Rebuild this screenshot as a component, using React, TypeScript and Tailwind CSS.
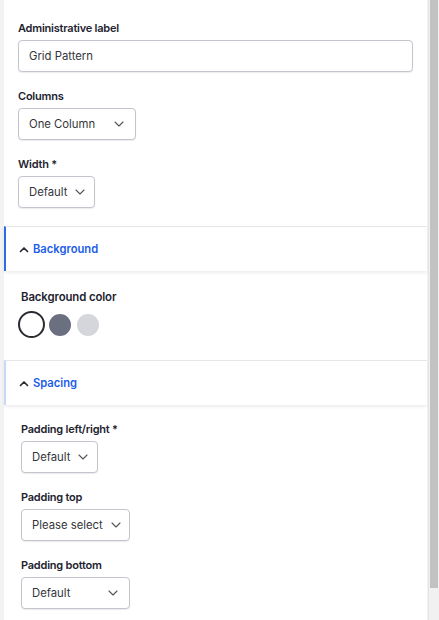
import React from "react"

const font = { fontFamily: "Inter, 'Noto Sans', sans-serif" }

function Chevron() {
  return (
    <svg width="10" height="6" viewBox="0 0 10 6" fill="none" className="shrink-0">
      <path d="M1 1l4 4 4-4" stroke="#55565b" strokeWidth="1.1" strokeLinecap="round" strokeLinejoin="round" />
    </svg>
  )
}

function Select({ value, width }: { value: string; width: string }) {
  return (
    <div
      className={`flex h-8 items-center justify-between gap-2 rounded-[4px] border border-[#c4c5cc] bg-white pl-[10px] pr-[11px] shadow-[0_1px_1px_rgba(0,0,0,0.08)] ${width}`}
    >
      <span className="whitespace-nowrap text-[11.3px] text-[#34353a]">{value}</span>
      <Chevron />
    </div>
  )
}

function Field({ label, children }: { label: string; children: React.ReactNode }) {
  return (
    <div className="flex flex-col gap-[5px]">
      <label className="text-[11px] font-semibold leading-[14px] tracking-[-0.02em] text-[#222330]">{label}</label>
      {children}
    </div>
  )
}

function AccordionHeader({ title, strong }: { title: string; strong?: boolean }) {
  return (
    <div
      className={`flex h-[45px] items-center gap-[4px] border-t border-[#e6e7ea] border-l-2 pl-[13px] shadow-[0_2px_3px_rgba(0,0,0,0.07)] ${
        strong ? "border-l-[#2f6ae8]" : "border-l-[#c9d8f7]"
      }`}
    >
      <svg width="10" height="7" viewBox="0 0 10 7" fill="none">
        <path d="M1.5 5.5L5 2l3.5 3.5" stroke="#2b2c33" strokeWidth="1.7" strokeLinecap="round" strokeLinejoin="round" />
      </svg>
      <span className="text-[11.2px] font-semibold text-[#1b5ce8]">{title}</span>
    </div>
  )
}

export default function App() {
  return (
    <div className="flex h-[620px] w-[439px] overflow-hidden bg-[#f3f3f4]" style={font}>
      <div className="ml-[4px] flex w-[423px] flex-col bg-white">
        <div className="flex flex-col gap-[17px] px-[14px] pt-[21px] pb-[18px]">
          <Field label="Administrative label">
            <div className="flex h-8 items-center rounded-[4px] border border-[#c4c5cc] bg-white px-[10px] shadow-[0_1px_1px_rgba(0,0,0,0.08)]">
              <span className="text-[11.3px] text-[#34353a]">Grid Pattern</span>
            </div>
          </Field>
          <Field label="Columns">
            <Select value="One Column" width="w-[118px]" />
          </Field>
          <Field label="Width *">
            <Select value="Default" width="w-[77px]" />
          </Field>
        </div>

        <AccordionHeader title="Background" strong />
        <div className="flex flex-col gap-[6px] px-[17px] pt-[19px] pb-[22px]">
          <span className="text-[11.4px] font-semibold leading-[15px] tracking-[-0.01em] text-[#222330]">Background color</span>
          <div className="-ml-[3px] flex items-center gap-[4px]">
            <span className="h-[27px] w-[27px] rounded-full border-2 border-[#2b2c33] bg-white" />
            <span className="h-[22px] w-[22px] rounded-full bg-[#6b7080]" />
            <span className="ml-[2px] h-[22px] w-[22px] rounded-full bg-[#d4d6db]" />
          </div>
        </div>

        <AccordionHeader title="Spacing" />
        <div className="flex flex-col gap-[17px] px-[17px] pt-[17px]">
          <Field label="Padding left/right *">
            <Select value="Default" width="w-[77px]" />
          </Field>
          <Field label="Padding top">
            <Select value="Please select" width="w-[109px]" />
          </Field>
          <Field label="Padding bottom">
            <Select value="Default" width="w-[109px]" />
          </Field>
        </div>
      </div>
      <div className="ml-[1px] flex w-[11px] flex-col border-l border-[#e4e4e4] bg-[#f1f1f1]">
        <div className="mx-auto h-[588px] w-[8px] bg-[#c2c2c2]" />
      </div>
    </div>
  )
}
